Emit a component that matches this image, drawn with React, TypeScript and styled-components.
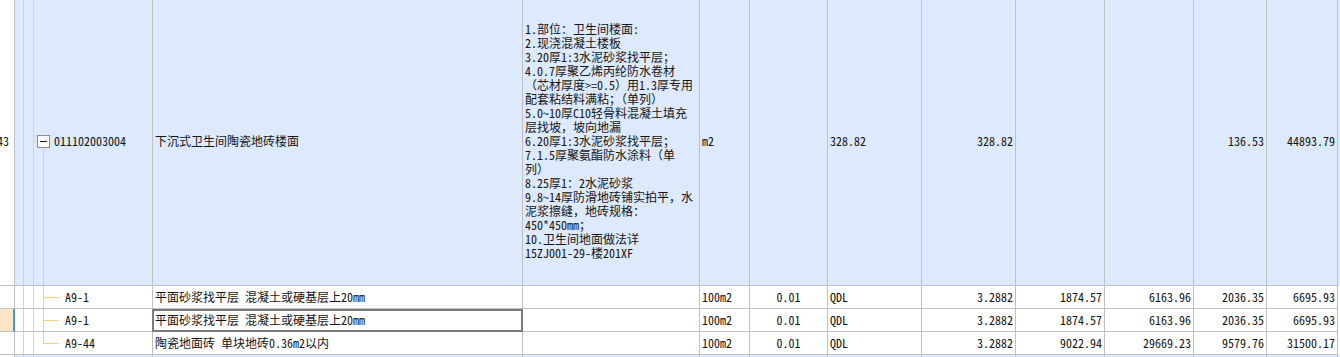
import React from "react";
import styled, { createGlobalStyle, css } from "styled-components";

const GRID = "#c0c0c0";
const GUIDE = "#ffc982";
const BLUE_BG = "#dde9fc";

const GlobalStyle = createGlobalStyle`
  html, body { margin: 0; padding: 0; background: #ffffff; }
  body {
    font-family: "Noto Sans Mono CJK SC", "Noto Sans CJK SC", "Liberation Mono", monospace;
    font-size: 12px;
    color: #141414;
    overflow: hidden;
  }
`;

const Sheet = styled.div`
  width: 1340px;
  height: 360px;
  margin-top: -3px;
  overflow: hidden;
`;

const Row = styled.div<{ $height: number; $bg: string }>`
  display: grid;
  grid-template-columns: 15px 138px 370px 177px 50px 78px 94px 94px 89px 89px 73px 71px;
  height: ${(p) => p.$height}px;
  background: ${(p) => p.$bg};
`;

const Cell = styled.div<{ $align?: "left" | "right" | "center" }>`
  box-sizing: border-box;
  border-right: 1px solid ${GRID};
  border-bottom: 1px solid ${GRID};
  display: flex;
  align-items: center;
  justify-content: ${(p) =>
    p.$align === "right" ? "flex-end" : p.$align === "center" ? "center" : "flex-start"};
  padding: 0 2px;
  white-space: nowrap;
  overflow: hidden;
  line-height: 14px;
`;

const IndexCell = styled(Cell)<{ $selected?: boolean }>`
  background: ${(p) => (p.$selected ? "#ffe6c6" : "#ffffff")};
  justify-content: flex-end;
  padding: 0 5px 0 0;
  overflow: visible;
  ${(p) =>
    p.$selected &&
    css`
      border-right: 2px solid #3b94f2;
    `}
`;

type TreeKind = "parent" | "child" | "lastChild" | "empty";

const guide = (x: string, y: string, h: string) =>
  `linear-gradient(${GUIDE}, ${GUIDE}) ${x} ${y} / 1px ${h} no-repeat`;

const TreeCell = styled(Cell)<{ $kind: TreeKind }>`
  padding: 0;
  background: ${(p) => {
    const base = [guide("8px", "0", "100%"), guide("18px", "0", "100%")];
    if (p.$kind === "parent") base.push(guide("28px", "150px", "100%"));
    if (p.$kind === "child") base.push(guide("28px", "0", "100%"));
    if (p.$kind === "lastChild") base.push(guide("28px", "0", "11px"));
    return base.join(", ");
  }};
`;

const Stub = styled.span`
  display: block;
  width: 4px;
  height: 1px;
  margin-left: 18px;
  background: ${GUIDE};
`;

const ExpandBox = styled.span`
  box-sizing: border-box;
  width: 13px;
  height: 13px;
  border: 1px solid #8a8a8a;
  background: #fbfcff;
  display: flex;
  align-items: center;
  justify-content: center;
  &::before {
    content: "";
    display: block;
    width: 7px;
    height: 1px;
    background: #1e1e1e;
  }
`;

const Connector = styled.span`
  display: block;
  width: 16px;
  height: 1px;
  margin-left: 28px;
  background: ${GUIDE};
`;

const CodeText = styled.span<{ $gap: number }>`
  margin-left: ${(p) => p.$gap}px;
`;

const NameCell = styled(Cell)<{ $focused?: boolean }>`
  ${(p) =>
    p.$focused &&
    css`
      outline: 2px solid #7b7b7b;
      outline-offset: -2px;
      margin-left: -1px;
      padding-left: 3px;
    `}
`;

const DescCell = styled(Cell)`
  flex-direction: column;
  align-items: flex-start;
  justify-content: center;
`;

const DescLine = styled.div`
  height: 14px;
  line-height: 14px;
  white-space: nowrap;
`;

const descLines = [
  "1.部位：卫生间楼面:",
  "2.现浇混凝土楼板",
  "3.20厚1:3水泥砂浆找平层；",
  "4.0.7厚聚乙烯丙纶防水卷材",
  "（芯材厚度>=0.5）用1.3厚专用",
  "配套粘结料满粘；（单列）",
  "5.0~10厚C10轻骨料混凝土填充",
  "层找坡，坡向地漏",
  "6.20厚1:3水泥砂浆找平层；",
  "7.1.5厚聚氨酯防水涂料（单",
  "列）",
  "8.25厚1：2水泥砂浆",
  "9.8~14厚防滑地砖铺实拍平，水",
  "泥浆擦缝，地砖规格：",
  "450*450mm；",
  "10.卫生间地面做法详",
  "15ZJ001-29-楼201XF",
];

type Child = {
  code: string;
  name: string;
  unit: string;
  coef: string;
  qty: string;
  amount: string;
  price: string;
  total: string;
  p2: string;
  t2: string;
};

const children: Child[] = [
  {
    code: "A9-1",
    name: "平面砂浆找平层 混凝土或硬基层上20mm",
    unit: "100m2",
    coef: "0.01",
    qty: "3.2882",
    amount: "1874.57",
    price: "6163.96",
    total: "2036.35",
    p2: "6695.93",
    t2: "",
  },
  {
    code: "A9-1",
    name: "平面砂浆找平层 混凝土或硬基层上20mm",
    unit: "100m2",
    coef: "0.01",
    qty: "3.2882",
    amount: "1874.57",
    price: "6163.96",
    total: "2036.35",
    p2: "6695.93",
    t2: "",
  },
  {
    code: "A9-44",
    name: "陶瓷地面砖 单块地砖0.36m2以内",
    unit: "100m2",
    coef: "0.01",
    qty: "3.2882",
    amount: "9022.94",
    price: "29669.23",
    total: "9579.76",
    p2: "31500.17",
    t2: "",
  },
];

export default function App() {
  return (
    <>
      <GlobalStyle />
      <Sheet>
        <Row $height={289} $bg={BLUE_BG}>
          <IndexCell>43</IndexCell>
          <TreeCell $kind="parent">
            <Stub />
            <ExpandBox />
            <CodeText $gap={4}>011102003004</CodeText>
          </TreeCell>
          <NameCell>下沉式卫生间陶瓷地砖楼面</NameCell>
          <DescCell>
            {descLines.map((l, i) => (
              <DescLine key={i}>{l}</DescLine>
            ))}
          </DescCell>
          <Cell>m2</Cell>
          <Cell />
          <Cell>328.82</Cell>
          <Cell $align="right">328.82</Cell>
          <Cell />
          <Cell />
          <Cell $align="right">136.53</Cell>
          <Cell $align="right">44893.79</Cell>
        </Row>
        {children.map((c, i) => (
          <Row key={i} $height={23} $bg="#ffffff">
            <IndexCell $selected={i === 1} />
            <TreeCell $kind={i === children.length - 1 ? "lastChild" : "child"}>
              <Connector />
              <CodeText $gap={6}>{c.code}</CodeText>
            </TreeCell>
            <NameCell $focused={i === 1}>{c.name}</NameCell>
            <Cell />
            <Cell>{c.unit}</Cell>
            <Cell $align="center">{c.coef}</Cell>
            <Cell>QDL</Cell>
            <Cell $align="right">{c.qty}</Cell>
            <Cell $align="right">{c.amount}</Cell>
            <Cell $align="right">{c.price}</Cell>
            <Cell $align="right">{c.total}</Cell>
            <Cell $align="right">{c.p2}</Cell>
          </Row>
        ))}
        <Row $height={23} $bg={BLUE_BG}>
          <IndexCell />
          <TreeCell $kind="empty" />
          <NameCell />
          <Cell />
          <Cell />
          <Cell />
          <Cell />
          <Cell />
          <Cell />
          <Cell />
          <Cell />
          <Cell />
        </Row>
      </Sheet>
    </>
  );
}
